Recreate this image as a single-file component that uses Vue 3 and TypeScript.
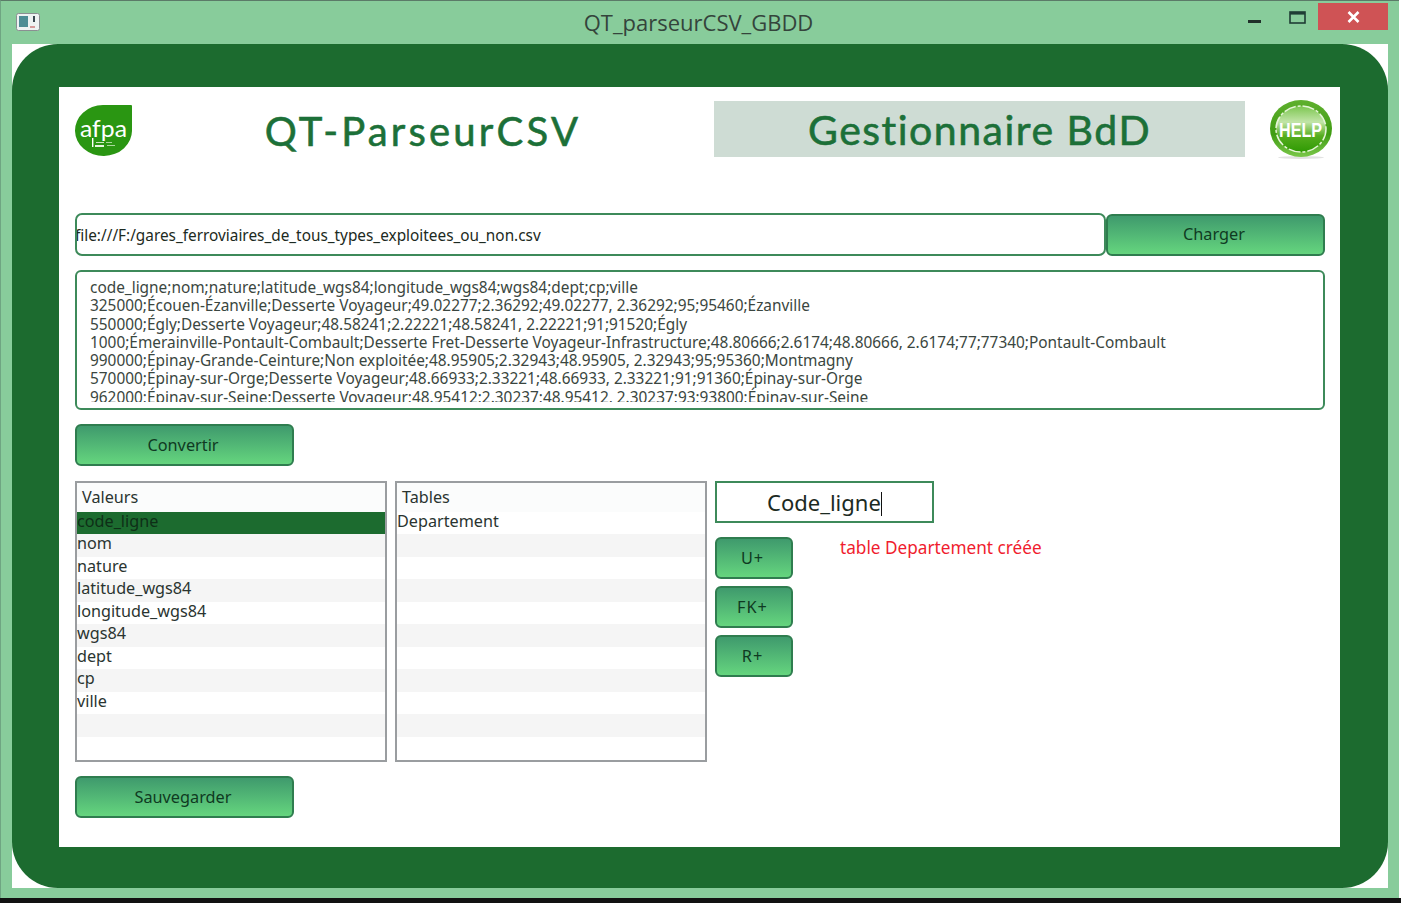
<template>
  <div class="window">
    <div class="titlebar">
      <svg class="app-icon" width="24" height="18" viewBox="0 0 24 18">
        <rect x="0.5" y="0.5" width="23" height="17" rx="2" fill="#eef2f2" stroke="#8b8f92" />
        <rect x="3" y="3" width="9" height="11" fill="#4d8d94" />
        <rect x="17" y="3" width="2" height="6" fill="#39474f" />
        <rect x="14" y="13" width="5" height="2" fill="#d59a9a" />
      </svg>
      <span class="title">QT_parseurCSV_GBDD</span>
      <div class="win-controls">
        <svg class="win-min" width="13" height="3" viewBox="0 0 13 3"><rect width="13" height="3" fill="#20302a" /></svg>
        <svg class="win-max" width="17" height="13" viewBox="0 0 17 13">
          <rect x="1" y="1" width="15" height="11" fill="none" stroke="#1f3d35" stroke-width="1.6" />
          <rect x="1" y="1" width="15" height="2.6" fill="#1f3d35" />
        </svg>
        <div class="win-close">
          <svg width="13" height="12" viewBox="0 0 13 12"><path d="M1.5 1 L11.5 11 M11.5 1 L1.5 11" stroke="#fff" stroke-width="2.6" /></svg>
        </div>
      </div>
    </div>

    <div class="client">
      <div class="frame">
        <div class="panel">
          <header class="head">
            <svg class="logo" width="57" height="51" viewBox="0 0 57 51">
              <path d="M28 0 H56 Q57 0 57 1 V25 A28.5 25.5 0 1 1 28 0 Z" fill="#2a9612" />
              <text x="28.5" y="32" textLength="47" lengthAdjust="spacingAndGlyphs" class="logo-text">afpa</text>
              <rect x="17" y="33" width="1.4" height="9" fill="#fff" />
              <rect x="21" y="37" width="8" height="1" fill="#c9e8bd" />
              <rect x="20" y="40" width="9" height="2" fill="#e6f5df" />
              <rect x="31" y="37" width="6" height="1" fill="#a9d99a" />
              <rect x="32" y="40" width="8" height="1" fill="#a9d99a" />
            </svg>
            <h1 class="app-name">QT-ParseurCSV</h1>
            <div class="manager">Gestionnaire BdD</div>
            <svg class="help" width="62" height="60" viewBox="0 0 62 60">
              <defs>
                <linearGradient id="helpBg" x1="0" y1="0" x2="0" y2="1">
                  <stop offset="0" stop-color="#5fb02e" />
                  <stop offset="0.6" stop-color="#3f9c12" />
                  <stop offset="1" stop-color="#7ac74a" />
                </linearGradient>
                <linearGradient id="helpIn" x1="0" y1="0" x2="0" y2="1">
                  <stop offset="0" stop-color="#7cc650" />
                  <stop offset="0.35" stop-color="#c2e5a8" />
                  <stop offset="0.65" stop-color="#56ad1e" />
                  <stop offset="1" stop-color="#2f9a04" />
                </linearGradient>
              </defs>
              <ellipse cx="31" cy="57.5" rx="23" ry="1.5" fill="#e2e2e2" />
              <ellipse cx="31" cy="28.5" rx="31" ry="28.5" fill="url(#helpBg)" />
              <ellipse cx="31" cy="29" rx="25" ry="23" fill="url(#helpIn)" stroke="#e6f5d8" stroke-width="1.5" stroke-dasharray="12 2 3 2" />
              <text x="30.5" y="37" textLength="43" lengthAdjust="spacingAndGlyphs" class="help-text">HELP</text>
            </svg>
          </header>

          <div class="file-row">
            <div class="file-input"><span class="file-path">file:///F:/gares_ferroviaires_de_tous_types_exploitees_ou_non.csv</span></div>
            <button class="btn btn-load">Charger</button>
          </div>

          <div class="csv-view">
            <div class="csv-lines">
              <div v-for="line in csvLines" :key="line">{{ line }}</div>
            </div>
          </div>

          <button class="btn btn-wide btn-convert">Convertir</button>

          <div class="work">
            <div class="list">
              <div class="list-head">Valeurs</div>
              <div
                v-for="(row, i) in valeurs"
                :key="i"
                class="row"
                :class="{ alt: i % 2 === 1, selected: i === 0 }"
              >{{ row }}</div>
            </div>
            <div class="list">
              <div class="list-head">Tables</div>
              <div
                v-for="(row, i) in tables"
                :key="i"
                class="row"
                :class="{ alt: i % 2 === 1 }"
              >{{ row }}</div>
            </div>
            <div class="side">
              <div class="name-input">Code_ligne<span class="caret" /></div>
              <div class="side-low">
                <div class="side-btns">
                  <button class="btn btn-small">U+</button>
                  <button class="btn btn-small">FK+</button>
                  <button class="btn btn-small">R+</button>
                </div>
                <span class="status">table Departement créée</span>
              </div>
            </div>
          </div>

          <button class="btn btn-wide btn-save">Sauvegarder</button>
        </div>
      </div>
    </div>
  </div>
</template>

<script setup lang="ts">
const csvLines: string[] = [
  'code_ligne;nom;nature;latitude_wgs84;longitude_wgs84;wgs84;dept;cp;ville',
  '325000;Écouen-Ézanville;Desserte Voyageur;49.02277;2.36292;49.02277, 2.36292;95;95460;Ézanville',
  '550000;Égly;Desserte Voyageur;48.58241;2.22221;48.58241, 2.22221;91;91520;Égly',
  '1000;Émerainville-Pontault-Combault;Desserte Fret-Desserte Voyageur-Infrastructure;48.80666;2.6174;48.80666, 2.6174;77;77340;Pontault-Combault',
  '990000;Épinay-Grande-Ceinture;Non exploitée;48.95905;2.32943;48.95905, 2.32943;95;95360;Montmagny',
  '570000;Épinay-sur-Orge;Desserte Voyageur;48.66933;2.33221;48.66933, 2.33221;91;91360;Épinay-sur-Orge',
  '962000;Épinay-sur-Seine;Desserte Voyageur;48.95412;2.30237;48.95412, 2.30237;93;93800;Épinay-sur-Seine',
]

const valeurs: string[] = [
  'code_ligne', 'nom', 'nature', 'latitude_wgs84', 'longitude_wgs84',
  'wgs84', 'dept', 'cp', 'ville', '', '',
]

const tables: string[] = ['Departement', '', '', '', '', '', '', '', '', '', '']
</script>

<style scoped>
.window {
  width: 1399px;
  height: 898px;
  box-sizing: border-box;
  background: #88cc9b;
  border-top: 1px solid #5b7a68;
  border-left: 1px solid #6fa582;
  padding: 0 11px 10px 11px;
  display: flex;
  flex-direction: column;
  font-family: "Noto Sans", "Open Sans", sans-serif;
  color: #1c2a22;
}

.titlebar {
  height: 43px;
  display: flex;
  align-items: center;
  position: relative;
  flex: none;
}

.app-icon {
  margin: -2px 0 0 4px;
}

.title {
  position: absolute;
  left: 0;
  right: 3px;
  top: 7px;
  text-align: center;
  font-size: 22px;
  line-height: 28px;
  color: #34443b;
  font-family: "Open Sans", sans-serif;
}

.win-controls {
  position: absolute;
  right: 0;
  top: 2px;
  display: flex;
  align-items: flex-start;
}

.win-min {
  margin: 17px 28px 0 0;
}

.win-max {
  margin: 8px 12px 0 0;
}

.win-close {
  width: 70px;
  height: 27px;
  background: #cf5355;
  display: flex;
  align-items: center;
  justify-content: center;
}

.client {
  flex: 1;
  background: #fff;
  min-height: 0;
  min-width: 0;
  display: flex;
}

.frame {
  flex: 1;
  min-width: 0;
  background: #1c6b2f;
  border-radius: 46px;
  padding: 43px 48px 41px 47px;
  display: flex;
}

.panel {
  flex: 1;
  min-width: 0;
  background: #fff;
  padding: 13px 15px 0 16px;
  display: flex;
  flex-direction: column;
}

.head {
  display: flex;
  align-items: flex-start;
  height: 113px;
  margin-right: -8px;
  flex: none;
}

.logo {
  margin-top: 5px;
  flex: none;
}

.logo-text {
  fill: #fff;
  font-family: "Lato", sans-serif;
  font-weight: 400;
  font-size: 23px;
  text-anchor: middle;
}

.app-name {
  margin: 6px 0 0 0;
  width: 582px;
  text-align: center;
  font-family: "Lato", sans-serif;
  font-size: 40px;
  line-height: 50px;
  font-weight: 400;
  letter-spacing: 3.2px;
  color: #1c7038;
  -webkit-text-stroke: 0.6px #1c7038;
  flex: none;
}

.manager {
  width: 531px;
  height: 56px;
  margin-top: 1px;
  background: #cedcd4;
  color: #1c7038;
  font-family: "Lato", sans-serif;
  font-size: 41px;
  line-height: 58px;
  letter-spacing: 1.5px;
  text-align: center;
  -webkit-text-stroke: 0.6px #1c7038;
  flex: none;
}

.help {
  margin-left: 25px;
  flex: none;
}

.help-text {
  fill: #fff;
  font-family: "Liberation Sans", sans-serif;
  font-weight: 700;
  font-size: 21px;
  text-anchor: middle;
}

.file-row {
  display: flex;
  align-items: center;
  height: 43px;
  flex: none;
}

.file-input {
  width: 1031px;
  height: 43px;
  box-sizing: border-box;
  border: 2px solid #3d8a5a;
  border-radius: 7px;
  font-size: 15.35px;
  line-height: 41px;
  white-space: nowrap;
  overflow: hidden;
  flex: none;
}

.file-path {
  margin-left: -2px;
}

.btn {
  display: block;
  box-sizing: border-box;
  border: 2px solid #2f7d4f;
  border-radius: 6px;
  background: linear-gradient(#3f9a6d, #65d57e);
  color: #0f3a22;
  font-family: inherit;
  font-size: 16.3px;
  padding: 0 3px 0 0;
}

.btn-load {
  width: 219px;
  height: 42px;
  padding-bottom: 2px;
}

.csv-view {
  margin-top: 14px;
  height: 140px;
  box-sizing: border-box;
  border: 2px solid #3d8a5a;
  border-radius: 6px;
  padding: 7px 13px 0 13px;
  font-size: 15.4px;
  line-height: 18.3px;
  white-space: nowrap;
  color: #3a4640;
  flex: none;
}

.csv-lines {
  height: 123px;
  overflow: hidden;
}

.btn-wide {
  width: 219px;
  height: 42px;
  flex: none;
}

.btn-convert {
  margin-top: 14px;
}

.work {
  display: flex;
  align-items: flex-start;
  gap: 8px;
  margin-top: 15px;
  flex: none;
}

.list {
  width: 312px;
  height: 281px;
  box-sizing: border-box;
  border: 2px solid #9a9da0;
  font-size: 16.2px;
  flex: none;
  overflow: hidden;
}

.list-head {
  height: 28.5px;
  line-height: 28.5px;
  padding-left: 5px;
  color: #2a3430;
  background: #fbfcfc;
}

.row {
  height: 22.5px;
  line-height: 19px;
  color: #2a3430;
}

.row.alt {
  background: #f5f5f5;
}

.row.selected {
  background: #1c6b2f;
  color: #0e2f17;
}

.side {
  display: flex;
  flex-direction: column;
}

.name-input {
  width: 219px;
  height: 42px;
  box-sizing: border-box;
  border: 2px solid #3d8a5a;
  font-size: 22px;
  line-height: 38px;
  padding-left: 50px;
  color: #1c2a22;
}

.caret {
  display: inline-block;
  width: 1px;
  height: 24px;
  background: #111;
  vertical-align: -5px;
}

.side-low {
  display: flex;
  align-items: flex-start;
  margin-top: 14px;
}

.side-btns {
  display: flex;
  flex-direction: column;
  gap: 7px;
}

.btn-small {
  width: 78px;
  height: 42px;
  letter-spacing: 1px;
}

.status {
  margin-left: 47px;
  font-size: 17.2px;
  line-height: 22px;
  color: #f01c2e;
  white-space: nowrap;
}

.btn-save {
  margin-top: 14px;
}
</style>

<style>
html, body {
  margin: 0;
}

body {
  overflow: hidden;
  height: 903px;
  background: linear-gradient(#fff 898px, #111 898px);
}
</style>
